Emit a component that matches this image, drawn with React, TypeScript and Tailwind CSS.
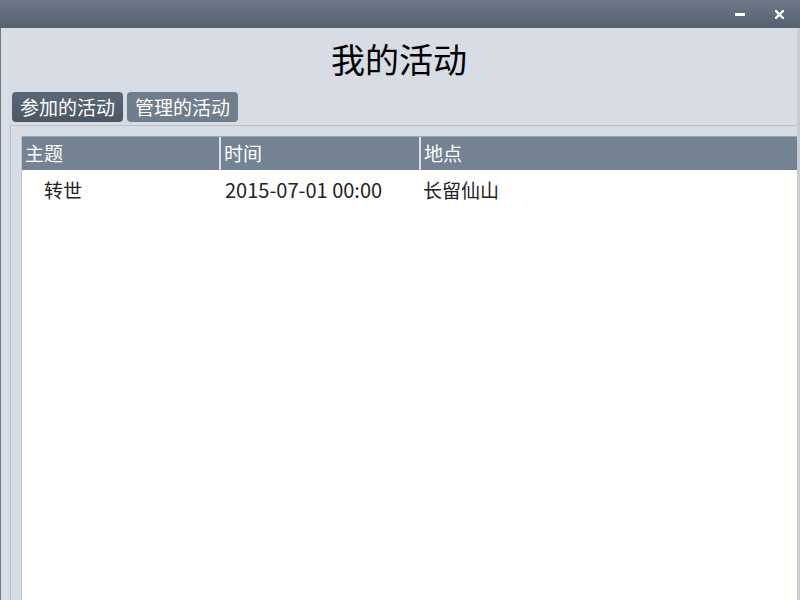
const rows = [["转世", "2015-07-01 00:00", "长留仙山"]];

export default function App() {
  return (
    <div className="flex h-[600px] w-[800px] flex-col overflow-hidden bg-[#d8dce4] font-['Noto_Sans_CJK_SC',sans-serif]">
      {/* title bar */}
      <div className="flex h-[28px] shrink-0 items-center justify-end bg-gradient-to-b from-[#6d7988] to-[#55616f] pr-[16px]">
        <span className="mr-[30px] mt-[1px] h-[3px] w-[10px] bg-white" />
        <svg width="9" height="9" viewBox="0 0 9 9" className="mt-[1px]">
          <path d="M1 1 L8 8 M8 1 L1 8" stroke="#fff" strokeWidth="2.4" strokeLinecap="square" />
        </svg>
      </div>

      <div className="flex min-h-0 flex-1 flex-col border-l border-[#6e7a8a] border-r-[3px] border-r-[#c9cdd6]">
        <h1 className="h-[64px] pt-[9px] text-center text-[34px] leading-[44px] text-black">我的活动</h1>

        <div className="flex gap-[4px] pl-[11px]">
          <button className="h-[30px] w-[111px] rounded-[4px] bg-gradient-to-b from-[#5d6978] to-[#4b5665] text-[19px] leading-[30px] text-white">
            参加的活动
          </button>
          <button className="h-[30px] w-[111px] rounded-[4px] bg-[#6f7d8c] text-[19px] leading-[30px] text-white">
            管理的活动
          </button>
        </div>

        <div className="ml-[9px] mt-[3px] flex min-h-0 flex-1 flex-col border-l border-t border-[#bcc2cc] pl-[10px] pt-[10px]">
          <div className="flex min-h-0 flex-1 flex-col border-l border-[#c3c8d0] bg-white">
            <div className="flex h-[34px] shrink-0 border-t border-[#9aa5b2] bg-[#748394] text-[19px] leading-[32px] text-white">
              <div className="w-[199px] border-r-2 border-[#dde2ea] pl-[3px]">主题</div>
              <div className="w-[200px] border-r-2 border-[#dde2ea] pl-[3px]">时间</div>
              <div className="flex-1 pl-[3px]">地点</div>
            </div>
            {rows.map(([topic, time, place]) => (
              <div key={topic} className="flex h-[40px] text-[19px] leading-[40px] text-[#222]">
                <div className="w-[201px] pl-[22px]">{topic}</div>
                <div className="w-[200px] pl-[2px] text-[20px]">{time}</div>
                <div className="flex-1">{place}</div>
              </div>
            ))}
          </div>
        </div>
      </div>
    </div>
  );
}
